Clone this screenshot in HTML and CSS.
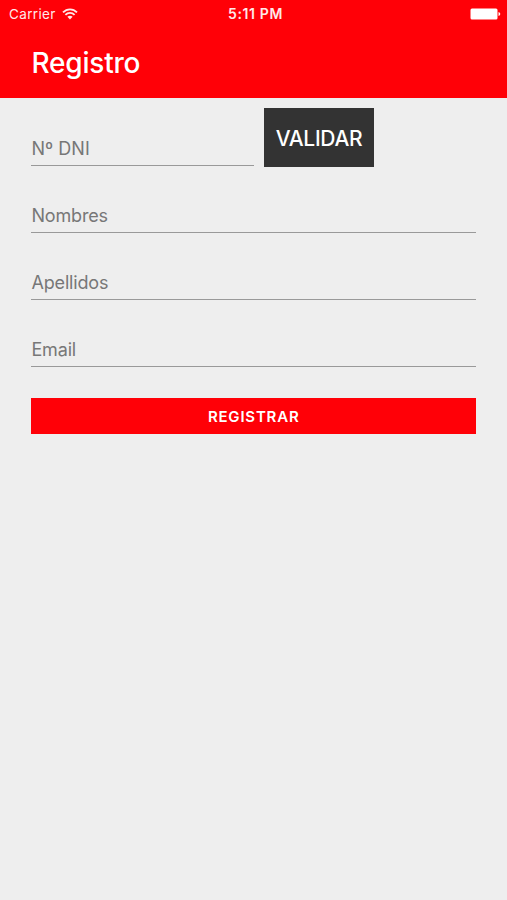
FILE: index.html
```html
<!DOCTYPE html>
<html lang="es">
<head>
<meta charset="utf-8">
<title>Registro</title>
<link rel="stylesheet" href="styles.css">
</head>
<body>
<header class="header">
  <div class="status">
    <div class="carrier"><span>Carrier</span>
      <svg class="wifi" width="16" height="12" viewBox="0 0 16 12" fill="none" stroke="currentColor" stroke-width="1.8"><path d="M1 4.4C5 .3 11 .3 15 4.4M3.4 6.9C6 4.2 10 4.2 12.6 6.9"/><path d="M8 11.4 5.4 8.8Q8 6.6 10.6 8.8Z" fill="currentColor" stroke="none"/></svg>
    </div>
    <span class="time">5:11 PM</span>
    <svg class="battery" width="31" height="12" viewBox="0 0 31 12" fill="currentColor"><rect x=".5" y=".5" width="27" height="11" rx="1.5"/><path d="M28.5 4Q30.3 4.5 30.3 6T28.5 8Z"/></svg>
  </div>
  <h1 class="title">Registro</h1>
</header>
<form class="form">
  <div class="row">
    <div class="field field-dni"><span>Nº DNI</span></div>
    <button type="button" class="validate">VALIDAR</button>
  </div>
  <div class="field"><span>Nombres</span></div>
  <div class="field"><span>Apellidos</span></div>
  <div class="field"><span>Email</span></div>
  <button type="button" class="submit">REGISTRAR</button>
</form>
</body>
</html>
```
FILE: styles.css
```css
* { box-sizing: border-box; }
body {
  margin: 0;
  min-height: 900px;
  background: #eee;
  font-family: Inter, "Liberation Sans", sans-serif;
}
.header {
  height: 98.4px;
  background: #ff0007;
  color: #fff;
}
.status {
  display: grid;
  grid-template-columns: 1fr auto 1fr;
  align-items: center;
  height: 27px;
  padding: 0 6px 0 9px;
  font-size: 13.5px;
  color: #ffe9e9;
}
.carrier { display: flex; align-items: center; gap: 6px; letter-spacing: .35px; }
.time { padding-left: 1px; font-weight: 600; font-size: 14px; letter-spacing: .6px; }
.battery { justify-self: end; color: #fff; }
.title {
  margin: 0;
  padding-left: 31.5px;
  font-size: 28px;
  font-weight: 500;
  letter-spacing: -.2px;
  line-height: 73px;
}
.form { padding: 0 31px 0 31.4px; }
.row { display: flex; gap: 10px; }
.field {
  display: flex;
  align-items: flex-end;
  height: 67.1px;
  padding-bottom: 5px;
  border-bottom: 1px solid #999;
  color: #777;
  font-size: 18px;
  letter-spacing: -.15px;
  line-height: 23px;
}
.field-dni { width: 222.6px; height: 67.6px; }
.field-dni span { letter-spacing: .05px; }
.validate, .submit {
  border: 0;
  padding: 0;
  font-family: inherit;
  color: #fff;
}
.validate {
  width: 110px;
  height: 59px;
  margin: 10px 0 -1.4px;
  padding-top: 2px;
  background: #333;
  font-size: 21px;
  font-weight: 500;
  letter-spacing: -.3px;
}
.submit {
  display: block;
  width: 100%;
  height: 36px;
  margin-top: 31px;
  background: #ff0007;
  font-size: 15px;
  font-weight: 600;
  letter-spacing: .8px;
}
```
